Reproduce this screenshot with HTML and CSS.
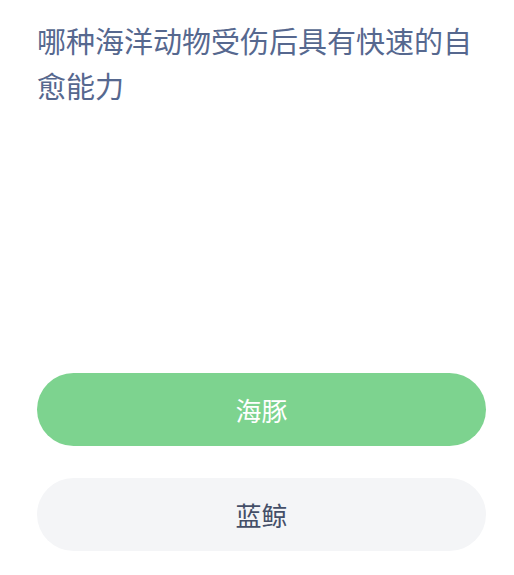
FILE: index.html
```html
<!DOCTYPE html>
<html lang="zh">
<head>
<meta charset="utf-8">
<link rel="stylesheet" href="styles.css">
</head>
<body>
<div class="page">
  <h1 class="question">哪种海洋动物受伤后具有快速的自愈能力</h1>
  <div class="options">
    <div class="option option-correct">海豚</div>
    <div class="option option-plain">蓝鲸</div>
  </div>
</div>
</body>
</html>
```
FILE: styles.css
```css
html, body {
  margin: 0;
  padding: 0;
  background: #ffffff;
}
.page {
  width: 514px;
  height: 575px;
  box-sizing: border-box;
  padding: 18px 28px 0 37px;
  font-family: "Noto Sans CJK SC", "Noto Sans", sans-serif;
  overflow: hidden;
}
.question {
  margin: 0;
  font-size: 29px;
  line-height: 45px;
  font-weight: 400;
  color: #56688f;
}
.options {
  margin-top: 265px;
  display: flex;
  flex-direction: column;
  gap: 32px;
}
.option {
  height: 73px;
  border-radius: 37px;
  display: flex;
  align-items: center;
  justify-content: center;
  font-size: 26px;
}
.option-correct {
  background: #7dd38f;
  color: #ffffff;
}
.option-plain {
  background: #f4f5f7;
  color: #444f68;
}
```
